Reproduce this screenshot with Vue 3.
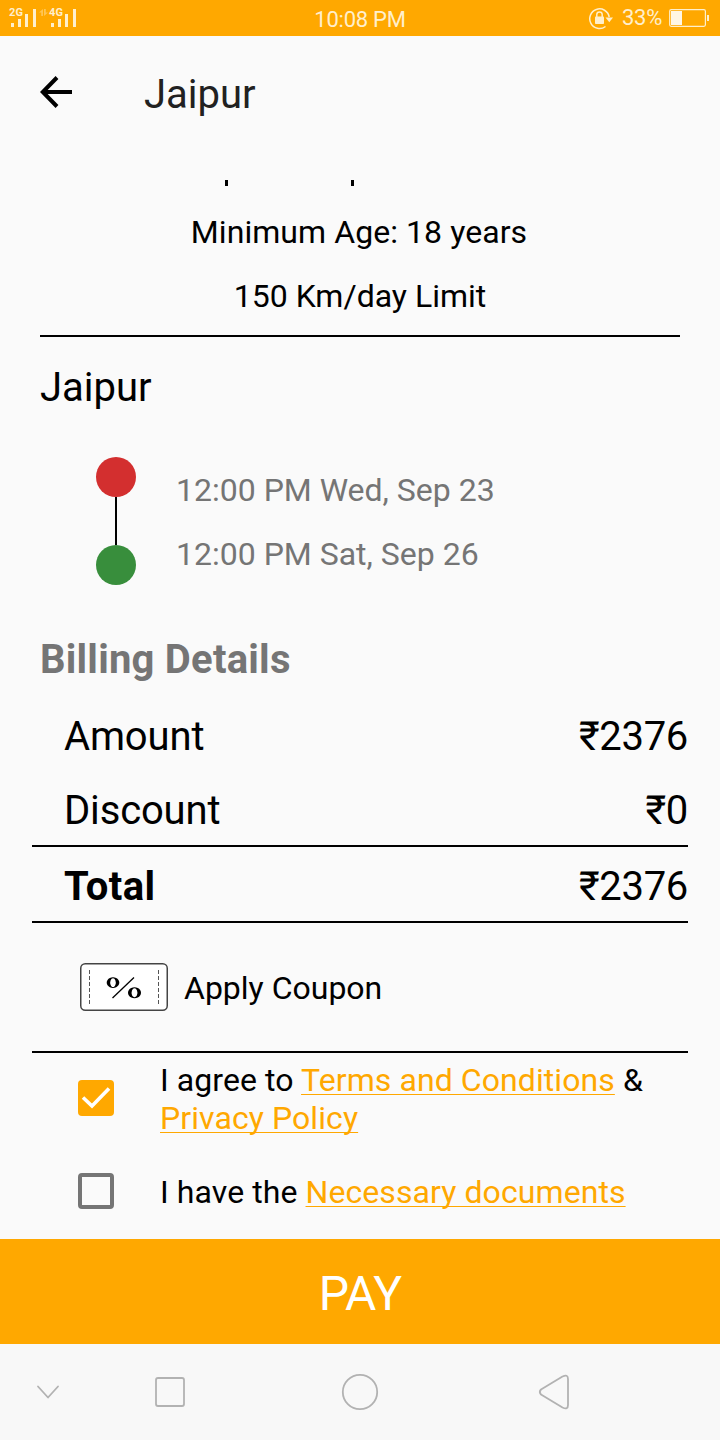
<script setup>
const billing = [
  { label: 'Amount', value: '₹2376' },
  { label: 'Discount', value: '₹0' },
]
</script>

<template>
  <div class="screen">
    <header class="status">
      <svg class="signal" width="120" height="36" viewBox="0 0 120 36">
        <g class="net">
          <text x="9" y="16" textLength="14">2G</text>
          <text x="49" y="16" textLength="14">4G</text>
        </g>
        <g fill="#ffefcc">
          <path d="M11 23h3v4h-3zM18 19h3v8h-3zM25 14h3v13h-3zM33 9h3v18h-3z" />
          <path d="M51 23h3v4h-3zM58 19h3v8h-3zM65 14h3v13h-3zM73 9h3v18h-3z" />
          <path opacity=".4" d="M39 12.500l4-3.500v7h-1.800v-3.500zM44 9v7l4-3.500h-2.200v-3.500z" />
        </g>
      </svg>
      <span class="clock">10:08 PM</span>
      <div class="power">
        <svg width="26" height="24" viewBox="0 0 26 24">
          <path fill="none" stroke="#ffefcc" stroke-width="1.500" d="M17.500 20.500A9.800 9.800 0 1 1 21.200 11" />
          <path fill="#ffefcc" d="M17.500 11.500h7.500l-3.700 4.700z" />
          <rect x="7" y="10.500" width="9" height="7.500" rx=".8" fill="#ffefcc" />
          <path fill="none" stroke="#ffefcc" stroke-width="1.500" d="M8.800 11V8.600a2.700 2.700 0 0 1 5.400 0V11" />
        </svg>
        <span class="percent">33%</span>
        <svg width="42" height="20" viewBox="0 0 42 20">
          <rect x=".7" y="1.700" width="35.700" height="16.600" rx="1.500" fill="none" stroke="#ffefcc" stroke-width="1.200" />
          <path fill="#fff6e5" d="M2 3h11v14H2z" />
          <path fill="#ffefcc" d="M38 7h2v6h-2z" />
        </svg>
      </div>
    </header>

    <nav class="appbar">
      <svg width="34" height="34" viewBox="0 0 34 34">
        <path fill="none" stroke="#000" stroke-width="4" d="M33 17H4.500M18 2.500L3.800 17 18 31.500" />
      </svg>
      <h1>Jaipur</h1>
    </nav>

    <main>
      <div class="clipped"><i></i><i></i></div>
      <p class="rule-text min-age">Minimum Age: 18 years</p>
      <p class="rule-text">150 Km/day Limit</p>
      <hr class="divider inset" />

      <h2 class="city">Jaipur</h2>

      <section class="trip">
        <div class="track">
          <span class="dot red"></span>
          <span class="link"></span>
          <span class="dot green"></span>
        </div>
        <div class="times">
          <p>12:00 PM Wed, Sep 23</p>
          <p>12:00 PM Sat, Sep 26</p>
        </div>
      </section>

      <h2 class="billing-title">Billing Details</h2>
      <div v-for="row in billing" :key="row.label" class="bill-row">
        <span>{{ row.label }}</span><span class="price">{{ row.value }}</span>
      </div>
      <hr class="divider" />
      <div class="bill-row total">
        <b>Total</b><span class="price">₹2376</span>
      </div>
      <hr class="divider" />

      <div class="coupon">
        <svg width="88" height="48" viewBox="0 0 88 48">
          <rect x=".75" y=".75" width="86.500" height="46.500" rx="4.500" fill="#fff" stroke="#444" stroke-width="1.500" />
          <path stroke="#555" stroke-width="1" stroke-dasharray="4 2" d="M9.500 7v36M78.500 7v36" />
          <path stroke="#000" stroke-width="1.300" d="M54 14.500L32.500 35" />
          <path fill="#000" fill-rule="evenodd" d="M33 14.200a6.300 5.400 0 1 0 .01 0zM33 15.200a2.800 4.400 0 1 1-.01 0zM54.500 24.200a6.500 5.500 0 1 0 .01 0zM54.500 25.200a2.900 4.500 0 1 1-.01 0z" />
        </svg>
        <span>Apply Coupon</span>
      </div>
      <hr class="divider" />

      <div class="consent agree">
        <svg width="36" height="36" viewBox="0 0 36 36">
          <rect width="36" height="36" rx="4" fill="#ffa800" />
          <path fill="none" stroke="#fff" stroke-width="3.600" d="M5 17.500l9 8.500L31 8.500" />
        </svg>
        <p>I agree to <a>Terms and Conditions</a> &amp;<br /><a>Privacy Policy</a></p>
      </div>
      <div class="consent documents">
        <svg width="36" height="36" viewBox="0 0 36 36">
          <rect x="2" y="2" width="32" height="32" rx="2" fill="none" stroke="#757575" stroke-width="4" />
        </svg>
        <p>I have the <a>Necessary documents</a></p>
      </div>
    </main>

    <button class="pay">PAY</button>

    <footer class="system">
      <svg width="720" height="96" viewBox="0 0 720 96" fill="none" stroke="#b2b2b2" stroke-width="1.800" stroke-linecap="round" stroke-linejoin="round">
        <path d="M38 42.500l10 11 10-11" />
        <rect x="156" y="34" width="28" height="28" rx="2" />
        <circle cx="360" cy="48" r="17.200" />
        <path d="M541 45.500L562.500 32.500Q568 29.800 568 35V61Q568 66.200 562.500 63.500L541 50.500Q538.500 48 541 45.500z" />
      </svg>
    </footer>
  </div>
</template>

<style>
body { margin: 0; }
</style>

<style scoped>
.screen {
  width: 720px;
  height: 1440px;
  display: flex;
  flex-direction: column;
  overflow: hidden;
  background: #fafafa;
  color: #000;
  font-family: Roboto, "Liberation Sans", sans-serif;
  font-size: 32px;
  line-height: 38px;
}
h1, h2, p { margin: 0; font-weight: 400; white-space: nowrap; }
svg { display: block; flex: none; }
.status {
  height: 36px;
  flex: none;
  display: grid;
  grid-template-columns: 240px 240px 240px;
  grid-template-rows: 36px;
  align-items: center;
  background: #ffa800;
  color: #ffefcc;
}
.net { fill: #ffefcc; font: bold 11px Roboto, sans-serif; }
.clock { text-align: center; font-size: 22px; line-height: 36px; padding-top: 3px; letter-spacing: -0.25px; }
.power {
  display: flex;
  align-items: center;
  height: 36px;
  padding-left: 108px;
}
.percent { width: 45px; margin: 0 2px 0 8px; font-size: 22px; line-height: 36px; letter-spacing: -0.3px; }
.appbar {
  height: 112px;
  flex: none;
  display: flex;
  align-items: center;
  padding: 0 39px;
}
.appbar h1 {
  margin: 5px 0 0 71px;
  font-size: 40px;
  color: #212121;
}
main { height: 1091px; flex: none; }
.clipped {
  height: 52px;
  display: flex;
  gap: 123px;
  padding: 32px 0 0 225px;
  box-sizing: border-box;
}
.clipped i { width: 3px; height: 5.500px; background: #000; }
.rule-text { height: 64px; line-height: 64px; text-align: center; }
.min-age { letter-spacing: 0.07px; padding-right: 2px; }
.divider { height: 2px; margin: 0 32px; border: 0; background: #000; }
.divider.inset { margin: 7px 40px 0; }
.city { height: 101px; line-height: 101px; padding-left: 40px; font-size: 40px; }
.trip { display: flex; height: 147px; padding-left: 96px; }
.track { display: flex; flex-direction: column; align-items: center; margin-top: 19px; }
.dot { width: 40px; height: 40px; flex: none; border-radius: 50%; }
.red { background: #d32f2f; }
.green { background: #388e3c; }
.link { width: 2px; height: 48px; flex: none; background: #000; }
.times { margin: 20px 0 0 40px; color: #757575; }
.times p { height: 64px; line-height: 64px; }
.billing-title {
  height: 114px;
  line-height: 149px;
  padding-left: 40px;
  font-size: 40px;
  font-weight: 700;
  letter-spacing: 0.22px;
  color: #757575;
}
.bill-row {
  height: 73px;
  line-height: 75px;
  display: flex;
  justify-content: space-between;
  padding: 0 32px 0 64px;
  font-size: 40px;
}
.bill-row:not(.total) span:first-child { letter-spacing: -0.15px; }
.bill-row + .bill-row { line-height: 77px; }
.bill-row.total { height: 74px; line-height: 80px; }
.total b { letter-spacing: 0.4px; }
.price { letter-spacing: -0.3px; }
.coupon {
  height: 128px;
  display: flex;
  align-items: center;
  gap: 16px;
  padding-left: 80px;
}
.coupon span { padding-top: 2px; }
.consent { display: flex; align-items: center; padding-left: 78px; gap: 46px; letter-spacing: 0.08px; }
.consent a {
  color: #ffa800;
  text-decoration: underline;
  text-decoration-thickness: 1px;
  text-underline-offset: 3px;
  text-decoration-skip-ink: none;
}
.agree { height: 92px; }
.agree svg { margin-top: -2px; }
.documents { height: 92px; }
.documents p { padding-top: 2px; }
.pay {
  height: 105px;
  flex: none;
  border: 0;
  padding: 3px 0 0;
  background: #ffa800;
  color: #fff;
  font-family: inherit;
  font-size: 48px;
  letter-spacing: -0.9px;
}
.system { height: 96px; flex: none; background: #f8f8f8; }
</style>
